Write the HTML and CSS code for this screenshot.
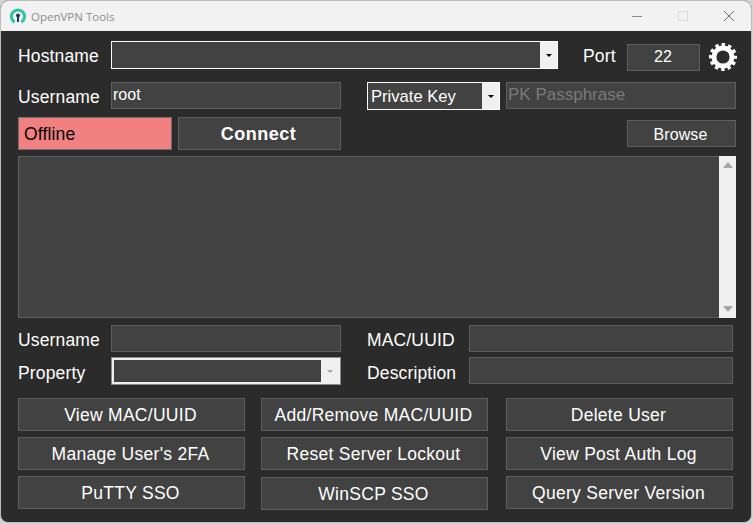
FILE: index.html
```html
<!DOCTYPE html>
<html lang="en">
<head>
  <meta charset="UTF-8">
  <title>OpenVPN Tools</title>
  <link rel="stylesheet" href="styles.css">
</head>
<body>
  <div class="window">
    <div class="titlebar">
      <svg class="app-icon" width="16" height="16" viewBox="0 0 16 16">
        <path d="M4.6 14.2 A6.6 6.6 0 1 1 11.4 14.2" fill="none" stroke="#2ec4a0" stroke-width="3"/>
        <circle cx="8" cy="7.4" r="2" fill="#1b3a5c"/>
        <rect x="7" y="8" width="2" height="6" fill="#1b3a5c"/>
      </svg>
      <span class="app-title">OpenVPN Tools</span>
      <div class="window-controls">
        <svg width="12" height="12" viewBox="0 0 12 12"><path d="M1 6.5H11" stroke="#8a8a8a"/></svg>
        <svg width="12" height="12" viewBox="0 0 12 12"><rect x="1.5" y="1.5" width="9" height="9" fill="none" stroke="#dcdcdc"/></svg>
        <svg width="12" height="12" viewBox="0 0 12 12"><path d="M1 1L11 11M11 1L1 11" stroke="#707070"/></svg>
      </div>
    </div>

    <div class="content">
      <div class="row row-host">
        <label class="label label-main">Hostname</label>
        <div class="combo combo-host">
          <span class="combo-value"></span>
          <span class="combo-arrow"></span>
        </div>
        <label class="label label-port">Port</label>
        <input class="field field-port" type="text" value="22">
        <svg class="gear" width="30" height="30" viewBox="0 0 30 30">
          <circle cx="15" cy="15" r="9" fill="none" stroke="#fff" stroke-width="4.8"/>
          <circle cx="15" cy="15" r="12.2" fill="none" stroke="#fff" stroke-width="3.6" stroke-dasharray="3.4 2.988" stroke-dashoffset="1.7"/>
        </svg>
      </div>

      <div class="row row-user">
        <label class="label label-main">Username</label>
        <input class="field field-wide" type="text" value="root">
        <div class="combo combo-key">
          <span class="combo-value">Private Key</span>
          <span class="combo-arrow"></span>
        </div>
        <input class="field field-wide field-pass" type="text" placeholder="PK Passphrase">
      </div>

      <div class="row row-status">
        <div class="status">Offline</div>
        <button class="btn btn-connect" type="button">Connect</button>
        <button class="btn btn-browse" type="button">Browse</button>
      </div>

      <div class="log">
        <div class="log-text"></div>
        <div class="scrollbar">
          <span class="scroll-up"></span>
          <span class="scroll-down"></span>
        </div>
      </div>

      <div class="row row-mac">
        <label class="label label-main">Username</label>
        <input class="field field-wide" type="text">
        <label class="label label-side">MAC/UUID</label>
        <input class="field field-side" type="text">
      </div>

      <div class="row row-prop">
        <label class="label label-main">Property</label>
        <div class="combo combo-prop">
          <span class="combo-value"></span>
          <span class="combo-arrow"></span>
        </div>
        <label class="label label-side">Description</label>
        <input class="field field-side" type="text">
      </div>

      <div class="actions">
        <div class="action-col">
          <button class="btn btn-action" type="button">View MAC/UUID</button>
          <button class="btn btn-action" type="button">Manage User's 2FA</button>
          <button class="btn btn-action" type="button">PuTTY SSO</button>
        </div>
        <div class="action-col action-mid">
          <button class="btn btn-action" type="button">Add/Remove MAC/UUID</button>
          <button class="btn btn-action" type="button">Reset Server Lockout</button>
          <button class="btn btn-action btn-low" type="button">WinSCP SSO</button>
        </div>
        <div class="action-col action-last">
          <button class="btn btn-action" type="button">Delete User</button>
          <button class="btn btn-action" type="button">View Post Auth Log</button>
          <button class="btn btn-action" type="button">Query Server Version</button>
        </div>
      </div>
    </div>
  </div>
</body>
</html>
```

FILE: styles.css
```css
* {
  box-sizing: border-box;
}

html, body {
  margin: 0;
  padding: 0;
  height: 100%;
  overflow: hidden;
}

body {
  background-color: #d4d4d4;
  font-family: "Liberation Sans", Arial, sans-serif;
  font-size: 17.5px;
  color: #ffffff;
}

.window {
  width: 752px;
  height: 523px;
  border: 1px solid #bdbdbd;
  border-radius: 8px;
  overflow: hidden;
  background-color: #2b2b2b;
}

.titlebar {
  height: 30px;
  display: flex;
  align-items: center;
  padding-left: 9px;
  background-color: #f2f2f2;
}

.app-title {
  margin-left: 5px;
  font-family: "Open Sans", sans-serif;
  font-size: 11.5px;
  color: #8c8c8c;
}

.window-controls {
  margin-left: auto;
  display: flex;
  gap: 34px;
  padding-right: 16px;
}

.content {
  padding: 10px 0 0 17px;
}

.row {
  display: flex;
  align-items: flex-start;
}

.row-host {
  height: 41px;
}

.row-user {
  height: 35px;
}

.row-status {
  height: 39px;
}

.row-mac {
  height: 32px;
  margin-top: 7px;
}

.row-prop {
  height: 41px;
}

.label {
  display: block;
  margin-top: 1px;
  line-height: 28px;
  white-space: nowrap;
  letter-spacing: 0.15px;
}

.row-prop .label {
  margin-top: 2px;
}

.label-main {
  width: 93px;
}

.label-port {
  margin-left: 25px;
  margin-top: 1px;
  width: 44px;
}

.label-side {
  width: 102px;
  margin-left: 26px;
}

.field {
  height: 27px;
  padding: 0 1px 1px;
  background-color: #424242;
  border: 1px solid #5e5e5e;
  color: #ffffff;
  font-family: inherit;
  font-size: 16px;
  outline: none;
  border-radius: 0;
}

.field::placeholder {
  color: #7a7a7a;
  opacity: 1;
}

.field-wide {
  width: 230px;
}

.field-port {
  width: 73px;
  margin-top: 3px;
  padding-right: 2px;
  text-align: center;
}

.field-pass {
  margin-left: 6px;
  font-size: 17px;
}

.field-side {
  width: 264px;
}

.gear {
  margin: 1px 0 0 8px;
}

.combo {
  display: flex;
  height: 28px;
  background-color: #424242;
  border: 1px solid #ffffff;
}

.combo-value {
  flex: 1;
  padding-left: 3px;
  line-height: 28px;
  font-size: 16.6px;
  white-space: nowrap;
}

.combo-arrow {
  width: 17px;
  display: flex;
  align-items: center;
  justify-content: center;
  background-color: #f0f0f0;
}

.combo-arrow::after {
  content: "";
  border-left: 3px solid transparent;
  border-right: 3px solid transparent;
  border-top: 3px solid #000000;
}

.combo-host {
  width: 447px;
}

.combo-key {
  width: 133px;
  margin-left: 26px;
}

.combo-prop {
  width: 230px;
  border: 3px solid #f0f0f0;
  outline: 1px solid #8c8c8c;
  outline-offset: -1px;
}

.combo-prop .combo-arrow::after {
  border-top-color: #a6a6a6;
}

.status {
  width: 154px;
  height: 33px;
  padding-left: 5px;
  line-height: 33px;
  background-color: #f28080;
  border: 1px solid #6e6e6e;
  color: #000000;
  letter-spacing: 0.15px;
}

.btn {
  background-color: #424242;
  border: 1px solid #5e5e5e;
  color: #ffffff;
  font-family: inherit;
  font-size: 17.5px;
  letter-spacing: 0.28px;
  padding: 2px 2px 0 0;
}

.btn-connect {
  width: 163px;
  height: 33px;
  margin-left: 6px;
  font-size: 18px;
  font-weight: bold;
  letter-spacing: 0.5px;
}

.btn-browse {
  width: 109px;
  height: 27px;
  margin: 3px 0 0 286px;
  padding-top: 3px;
  font-size: 16px;
  letter-spacing: 0.1px;
}

.log {
  display: flex;
  width: 718px;
  height: 162px;
  background-color: #424242;
  border: 1px solid #5e5e5e;
  border-right: 0;
}

.log-text {
  flex: 1;
}

.scrollbar {
  width: 17px;
  margin: -1px 0;
  display: flex;
  flex-direction: column;
  justify-content: space-between;
  align-items: center;
  padding: 6px 0;
  background-color: #f0f0f0;
}

.scroll-up {
  border-left: 5px solid transparent;
  border-right: 5px solid transparent;
  border-bottom: 6px solid #a6a6a6;
}

.scroll-down {
  border-left: 5px solid transparent;
  border-right: 5px solid transparent;
  border-top: 6px solid #a6a6a6;
}

.actions {
  display: flex;
}

.action-col {
  display: flex;
  flex-direction: column;
  gap: 6px;
  width: 227px;
}

.action-mid {
  margin-left: 16px;
}

.action-last {
  margin-left: 18px;
}

.btn-action {
  height: 33px;
  flex: none;
}

.btn-low {
  margin-top: 1px;
}
```
